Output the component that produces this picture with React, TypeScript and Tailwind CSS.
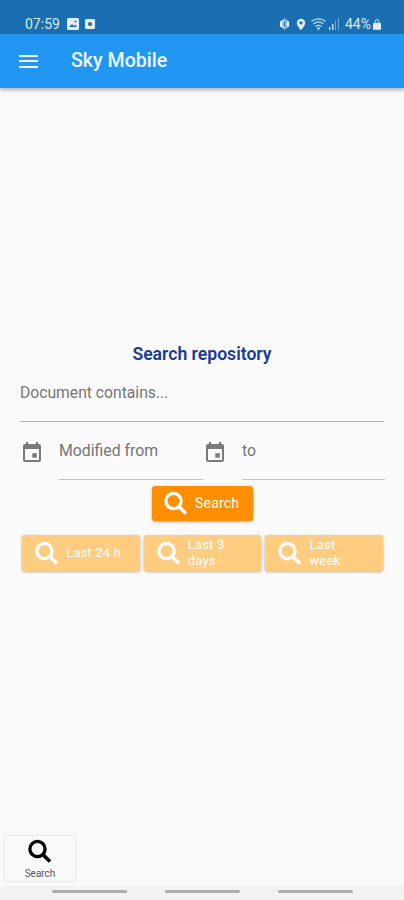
const font = { fontFamily: "Roboto, sans-serif" };

function SearchIcon({ className }: { className: string }) {
  return (
    <svg viewBox="0 0 24 24" className={className} fill="none" stroke="currentColor">
      <circle cx="9.500" cy="10" r="6.300" strokeWidth="2.700" />
      <path d="M14.400 15l5.500 5.300" strokeWidth="2.900" />
    </svg>
  );
}

function CalendarIcon() {
  return (
    <svg viewBox="0 0 24 24" className="w-6 h-6 shrink-0 text-[#7a7a7a]" fill="currentColor">
      <path d="M19 4h-1V2h-2v2H8V2H6v2H5c-1.100 0-2 .9-2 2v14c0 1.100.9 2 2 2h14c1.100 0 2-.9 2-2V6c0-1.100-.9-2-2-2zm0 16H5V9h14v11z" />
      <path d="M12 13h5v5h-5z" transform="translate(1.500 1.500) scale(0.9)" />
    </svg>
  );
}

function QuickButton({ lines }: { lines: string[] }) {
  return (
    <div className="h-[36px] flex-1 flex items-center pl-[11px] rounded-[3px] bg-[#ffcc80] text-white shadow-[0_1px_3px_rgba(0,0,0,0.3)]">
      <SearchIcon className="w-[29px] h-[29px] shrink-0" />
      <div className="ml-[4px] text-[13px] leading-[16px] tracking-[0.2px]">
        {lines.map((l) => (
          <div key={l}>{l}</div>
        ))}
      </div>
    </div>
  );
}

export default function App() {
  return (
    <div className="w-[404px] h-[900px] bg-[#fafafa] flex flex-col overflow-hidden" style={font}>
      <div className="h-[34px] bg-[#1a6fb3] flex items-end pb-[1px] pl-[25px] pr-[23px] text-[#dbe9f5] shrink-0">
        <span className="text-[14px] leading-[18px]">07:59</span>
        <svg viewBox="0 0 12 12" className="w-3 h-3 ml-[7px] mb-[3px]">
          <rect width="12" height="12" rx="1.500" fill="#e3eef8" />
          <path d="M2 9l3-3 2 2 1.500-1.500L10 9z" fill="#1a6fb3" />
          <circle cx="8.500" cy="3.500" r="1" fill="#1a6fb3" />
        </svg>
        <svg viewBox="0 0 12 12" className="w-[10px] h-3 ml-[6px] mb-[3px]">
          <rect width="12" height="12" rx="1.500" fill="#e3eef8" />
          <circle cx="6" cy="6" r="2.500" fill="#1a6fb3" />
        </svg>
        <div className="flex-1" />
        <svg viewBox="0 0 12 12" className="w-[11px] h-3 mb-[3px]">
          <path d="M6 0l2 2 3 1v6l-3 1-2 2-2-2-3-1V3l3-1z" fill="#dbe9f5" />
          <path d="M3.500 4l5 4L6 10V2l2.500 2-5 4" fill="none" stroke="#1a6fb3" strokeWidth="0.9" />
        </svg>
        <svg viewBox="0 0 12 14" className="w-[10px] h-[13px] ml-[6px] mb-[2px]">
          <path d="M6 0a5 5 0 0 0-5 5c0 3.500 5 9 5 9s5-5.500 5-9a5 5 0 0 0-5-5z" fill="#e3eef8" />
          <circle cx="6" cy="5" r="2" fill="#1a6fb3" />
        </svg>
        <svg viewBox="0 0 16 12" className="w-[16px] h-3 ml-[5px] mb-[3px]" fill="none" stroke="#c4daed" strokeWidth="1.300">
          <path d="M0.500 3.500C4.500 0 10.500 0 14.500 3.500M2.500 6C5.500 3.500 9.500 3.500 12.500 6M4.500 8.500C6.500 7 8.500 7 10.500 8.500" />
          <circle cx="7.500" cy="10.500" r="0.700" fill="#c4daed" />
        </svg>
        <svg viewBox="0 0 10 12" className="w-[10px] h-3 ml-[2px] mb-[3px]" fill="#6fa6d2">
          <rect x="0" y="9" width="1.500" height="3" fill="#c4daed" />
          <rect x="3" y="6" width="1.500" height="6" fill="#c4daed" />
          <rect x="6" y="3" width="1" height="9" />
          <rect x="9" y="0" width="1" height="12" />
        </svg>
        <span className="text-[14px] leading-[18px] ml-[6px]">44%</span>
        <svg viewBox="0 0 9 12" className="w-[8px] h-[11px] ml-[2px] mb-[3px]">
          <rect x="0" y="4" width="9" height="8" rx="1" fill="#e3eef8" />
          <path d="M2.500 4V2.500a2 2 0 0 1 4 0V4" fill="none" stroke="#e3eef8" />
        </svg>
      </div>

      <div className="h-[54px] bg-[#2196f3] flex items-center pl-[16px] shrink-0 shadow-[0_2px_4px_rgba(0,0,0,0.3)] z-10">
        <div className="w-[24px] flex flex-col gap-[3.500px] items-center">
          <div className="w-[19px] h-[2px] bg-[#eef7fe]" />
          <div className="w-[19px] h-[2px] bg-[#eef7fe]" />
          <div className="w-[19px] h-[2px] bg-[#eef7fe]" />
        </div>
        <span className="ml-[31px] text-[19.6px] font-medium text-[#eef7fe]">Sky Mobile</span>
      </div>

      <div className="flex-1 flex flex-col">
        <div className="mt-[255px] h-[22px] text-center text-[17.6px] leading-[22px] font-semibold text-[#1a3a96]">
          Search repository
        </div>

        <div className="mt-[7px] mx-[20px] h-[50px] border-b-[1.500px] border-[#b5b5b5] text-[15.7px] leading-[24px] pt-[9px] text-[#757575]">
          Document contains...
        </div>

        <div className="mt-[7px] ml-[20px] mr-[19px] flex">
          <div className="flex w-[183px]">
            <div className="pt-[11px]">
              <CalendarIcon />
            </div>
            <div className="ml-[15px] w-[144px] h-[51px] border-b-[1.500px] border-[#c4c4c4] text-[15.8px] leading-[24px] pt-[10px] text-[#757575]">
              Modified from
            </div>
          </div>
          <div className="flex flex-1">
            <div className="pt-[11px]">
              <CalendarIcon />
            </div>
            <div className="ml-[15px] flex-1 h-[51px] border-b-[1.500px] border-[#c4c4c4] text-[15.8px] leading-[24px] pt-[10px] text-[#757575]">
              to
            </div>
          </div>
        </div>

        <div className="mt-[6px] flex justify-center pl-[1px]">
          <div className="w-[101px] h-[35px] bg-[#ff8f00] rounded-[3px] flex items-center pl-[10px] text-white shadow-[0_1px_3px_rgba(0,0,0,0.3)]">
            <SearchIcon className="w-[29px] h-[29px] shrink-0" />
            <span className="ml-[4px] text-[14px] tracking-[0.2px]">Search</span>
          </div>
        </div>

        <div className="mt-[14px] ml-[22px] mr-[21px] flex gap-[4px]">
          <QuickButton lines={["Last 24 h"]} />
          <QuickButton lines={["Last 3", "days"]} />
          <QuickButton lines={["Last", "week"]} />
        </div>

        <div className="flex-1" />

        <div className="ml-[4px] mb-[4px] w-[72px] h-[47px] border border-[#ececec] rounded-[3px] flex flex-col items-center shadow-[0_0_2px_rgba(0,0,0,0.08)]">
          <SearchIcon className="w-[29px] h-[29px] text-black mt-[1px]" />
          <span className="text-[10px] leading-[12px] text-[#555] mt-[2px]">Search</span>
        </div>
      </div>

      <div className="h-[14px] bg-[#f2f2f2] flex justify-center gap-[38px] pt-[4px] shrink-0">
        <div className="w-[75px] h-[3px] bg-[#aeaeae] rounded-full" />
        <div className="w-[75px] h-[3px] bg-[#aeaeae] rounded-full" />
        <div className="w-[75px] h-[3px] bg-[#aeaeae] rounded-full" />
      </div>
    </div>
  );
}
